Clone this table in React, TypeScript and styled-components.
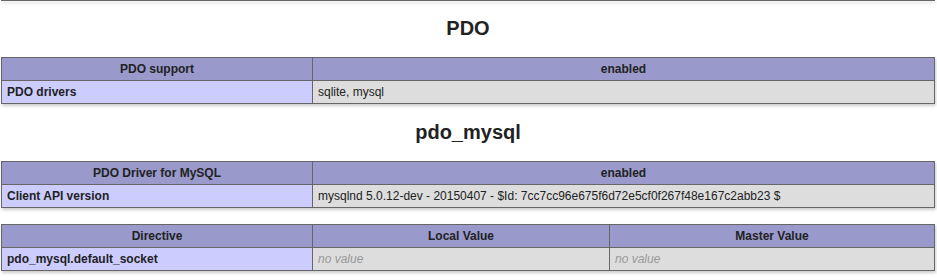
import React from 'react';
import styled, { createGlobalStyle } from 'styled-components';

const GlobalStyle = createGlobalStyle`
  html, body {
    margin: 0;
    padding: 0;
    background: #fff;
    color: #222;
    font-family: 'Liberation Sans', Arial, sans-serif;
  }
`;

const Page = styled.div`
  width: 934px;
  margin: 0 0 0 1px;
`;

// bottom edge of the section above, scrolled mostly out of view
const PrevTableEdge = styled.div`
  height: 0;
  border-bottom: 1px solid #666;
  box-shadow: 1px 2px 3px #ccc;
`;

const SectionTitle = styled.h2`
  margin: 16px 0 17px;
  font-size: 20px;
  line-height: 23px;
  font-weight: bold;
  text-align: center;
`;

const Table = styled.table<{ $gap?: number }>`
  border-collapse: collapse;
  border: 0;
  width: 934px;
  table-layout: fixed;
  box-shadow: 1px 2px 3px #ccc;
  margin: 0 0 ${(p) => p.$gap ?? 16}px;
  text-align: left;
`;

const Cell = styled.td<{ $kind: 'e' | 'v' }>`
  border: 1px solid #666;
  font-size: 12px;
  line-height: 14px;
  padding: 4px 5px;
  vertical-align: baseline;
  background-color: ${(p) => (p.$kind === 'e' ? '#ccf' : '#ddd')};
  font-weight: ${(p) => (p.$kind === 'e' ? 'bold' : 'normal')};
  word-wrap: break-word;
`;

const Head = styled.th`
  border: 1px solid #666;
  font-size: 12px;
  line-height: 14px;
  padding: 4px 5px;
  vertical-align: baseline;
  background-color: #99c;
  font-weight: bold;
  text-align: center;
`;

const NoValue = styled.i`
  color: #999;
`;

export default function App() {
  return (
    <Page>
      <GlobalStyle />
      <PrevTableEdge />

      <SectionTitle>PDO</SectionTitle>
      <Table $gap={17}>
        <colgroup>
          <col style={{ width: 311 }} />
          <col />
        </colgroup>
        <tbody>
          <tr>
            <Head>PDO support</Head>
            <Head>enabled</Head>
          </tr>
          <tr>
            <Cell $kind="e">PDO drivers </Cell>
            <Cell $kind="v">sqlite, mysql </Cell>
          </tr>
        </tbody>
      </Table>

      <SectionTitle>pdo_mysql</SectionTitle>
      <Table>
        <colgroup>
          <col style={{ width: 311 }} />
          <col />
        </colgroup>
        <tbody>
          <tr>
            <Head>PDO Driver for MySQL</Head>
            <Head>enabled</Head>
          </tr>
          <tr>
            <Cell $kind="e">Client API version </Cell>
            <Cell $kind="v">
              mysqlnd 5.0.12-dev - 20150407 - $Id: 7cc7cc96e675f6d72e5cf0f267f48e167c2abb23 $
            </Cell>
          </tr>
        </tbody>
      </Table>

      <Table>
        <colgroup>
          <col style={{ width: 311 }} />
          <col style={{ width: 297 }} />
          <col />
        </colgroup>
        <tbody>
          <tr>
            <Head>Directive</Head>
            <Head>Local Value</Head>
            <Head>Master Value</Head>
          </tr>
          <tr>
            <Cell $kind="e">pdo_mysql.default_socket</Cell>
            <Cell $kind="v">
              <NoValue>no value</NoValue>
            </Cell>
            <Cell $kind="v">
              <NoValue>no value</NoValue>
            </Cell>
          </tr>
        </tbody>
      </Table>
    </Page>
  );
}
